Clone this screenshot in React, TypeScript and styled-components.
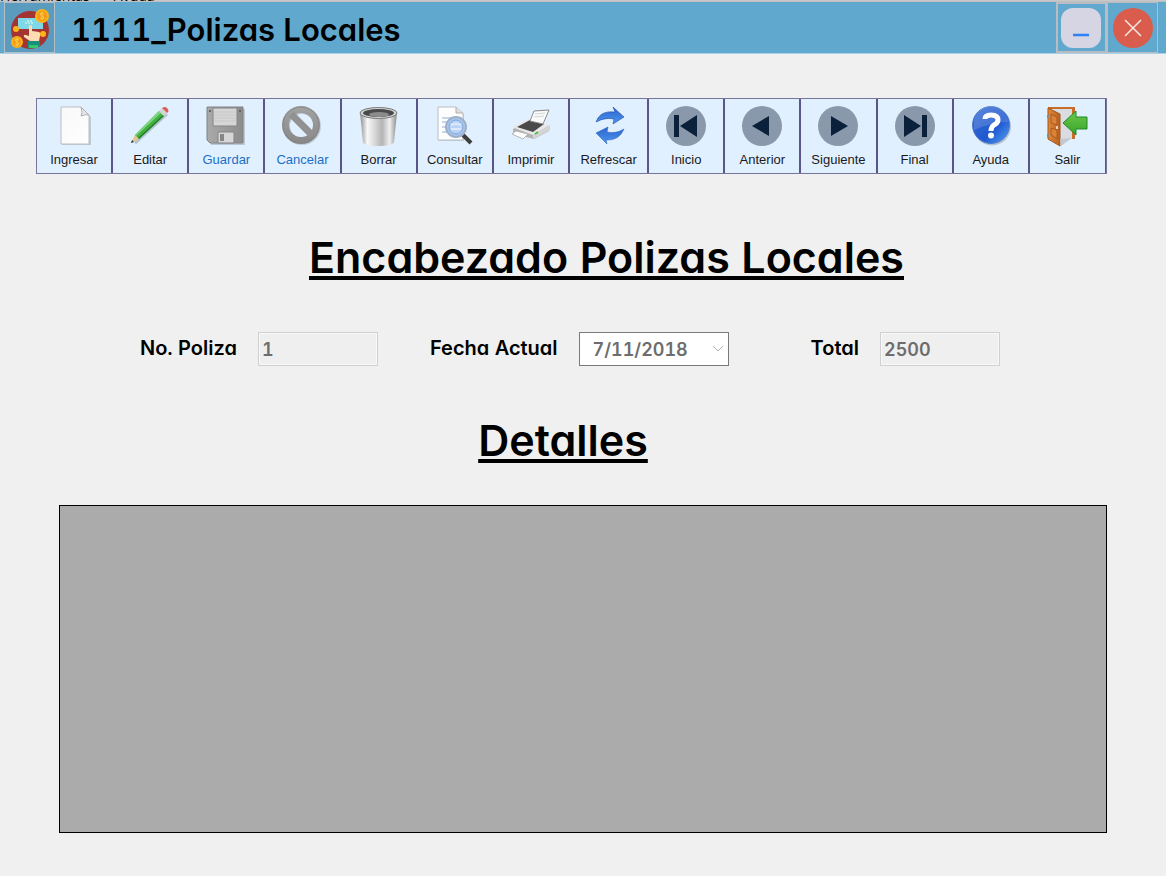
import React from "react";
import styled, { createGlobalStyle } from "styled-components";

const display = `Inter, "Open Sans", sans-serif`;

const Global = createGlobalStyle`
  *, *::before, *::after { box-sizing: border-box; }
  body {
    margin: 0;
    background: #f0f0f0;
    color: #000;
    font-family: ${display};
    font-feature-settings: "cv11", "tnum";
  }
  button, input, select { font: inherit; font-feature-settings: inherit; margin: 0; }
  svg { display: block; }
`;

const Window = styled.div`
  display: flex;
  flex-direction: column;
  min-height: 100vh;
`;

const MenuStrip = styled.div`
  display: flex;
  align-items: flex-end;
  gap: 24px;
  height: 2px;
  overflow: hidden;
  background: #c8c8c8;
  border-bottom: 1px solid #c0c0c0;
  font: 14px/10px "Open Sans", sans-serif;
`;

const TitleBar = styled.header`
  display: flex;
  align-items: center;
  height: 52px;
  padding: 0 8px 0 4px;
  background: #61a8cf;
  border-bottom: 1px solid #a9d0e6;
`;

const Logo = styled.div`
  display: grid;
  place-items: center;
  width: 51px;
  height: 51px;
  background: #5b9bbe;
  border: 1px solid #b4bec4;
`;

const Title = styled.h1`
  flex: 1;
  margin: 4px 0 0 16px;
  font-size: 31px;
  line-height: 40px;
  font-weight: 600;
`;

const Caption = styled.button<{ $thick?: boolean }>`
  display: grid;
  place-items: center;
  width: 51px;
  height: 51px;
  padding: 0;
  background: #61a8cf;
  border: ${(p) => (p.$thick ? 2 : 1)}px solid #b9bcc0;
`;

const Toolbar = styled.nav`
  display: flex;
  margin: 44px 59px 0 36px;
  background: #e0f0ff;
  border: 1px solid #78759c;
`;

const Tool = styled.button<{ $wide?: boolean }>`
  display: flex;
  flex: 1 1 ${(p) => (p.$wide ? 79 : 76)}px;
  min-width: 0;
  flex-direction: column;
  align-items: center;
  gap: 5px;
  height: 74px;
  padding: 6px 0 0;
  background: #e0f0ff;
  border: 0;
  border-right: 2px solid #5b568a;
  color: #1a1a1a;
  font: 13px/16px "Liberation Sans", Arial, sans-serif;
  &:last-child { border-right-width: 1px; }
  &:disabled { color: #1c6fc4; }
`;

const Heading = styled.h2`
  margin: 0;
  font-size: 43px;
  line-height: 52px;
  font-weight: 600;
  text-align: center;
  text-decoration: underline;
  text-decoration-thickness: 4px;
  text-underline-offset: 3px;
  text-decoration-skip-ink: none;
`;

const MainHeading = styled(Heading)`
  margin-top: 57px;
  padding-left: 47px;
`;

const DetailHeading = styled(Heading)`
  margin-top: 48px;
  padding-right: 40px;
`;

const Fields = styled.form`
  display: flex;
  gap: 52px;
  margin: 49px 166px 0 140px;
  font-size: 18px;
  font-weight: 600;
`;

const Field = styled.div`
  display: flex;
  gap: 21px;
  &:last-child { margin-left: auto; }
`;

const Label = styled.label`
  font-size: 20px;
  line-height: 32px;
`;

const Input = styled.input`
  width: 120px;
  height: 34px;
  padding: 0 3px;
  border: 1px solid #d0d0d0;
  background: #efefef;
  color: #6d6d6d;
  box-shadow: inset 0 0 0 1px #f8f8f8;
`;

const DateBox = styled.select`
  width: 150px;
  height: 34px;
  padding: 0 13px;
  appearance: none;
  border: 1px solid #7a7a7a;
  border-radius: 0;
  background: #fff;
  color: #6d6d6d;
  opacity: 1;
`;

const DateWrap = styled.div`
  display: grid;
  align-items: center;
  > * { grid-area: 1 / 1; }
  > svg { justify-self: end; margin-right: 5px; pointer-events: none; }
`;

const Grid = styled.section`
  flex: 1;
  margin: 39px 59px 43px;
  min-height: 200px;
  border: 1px solid #000;
  background: #ababab;
`;

const Icon = ({ children }: { children: React.ReactNode }) => (
  <svg width="42" height="42" viewBox="0 0 42 42" aria-hidden="true">{children}</svg>
);

const Defs = styled.svg`
  position: absolute;
`;

const Shapes = () => (
  <Defs width="0" height="0" aria-hidden="true">
    <defs>
      <linearGradient id="paper" x1="0" y1="0" x2="1" y2="1"><stop offset="0" stopColor="#f8f8f8" /><stop offset="1" stopColor="#fff" /></linearGradient>
      <linearGradient id="metal" x1="0" x2="1"><stop offset="0" stopColor="#8e8e8e" /><stop offset=".2" stopColor="#f8f8f8" /><stop offset=".42" stopColor="#d4d4d4" /><stop offset=".6" stopColor="#b4b4b4" /><stop offset=".8" stopColor="#f0f0f0" /><stop offset="1" stopColor="#8a8a8a" /></linearGradient>
      <linearGradient id="blue" x1="0" y1="0" x2="1" y2="1"><stop offset="0" stopColor="#3a6fd4" /><stop offset=".6" stopColor="#2058d0" /><stop offset="1" stopColor="#55a5f5" /></linearGradient>
      <linearGradient id="arrow" x1="0" y1="0" x2="0" y2="1"><stop offset="0" stopColor="#2b62cf" /><stop offset="1" stopColor="#4f97ee" /></linearGradient>
      <linearGradient id="green" x1="0" y1="0" x2="0" y2="1"><stop offset="0" stopColor="#6cc94a" /><stop offset="1" stopColor="#35a52c" /></linearGradient>
      <linearGradient id="wood" x1="0" x2="1"><stop offset="0" stopColor="#e08a3c" /><stop offset="1" stopColor="#b9601e" /></linearGradient>
      <linearGradient id="grey" x1="0" y1="0" x2="0" y2="1"><stop offset="0" stopColor="#a0a0a0" /><stop offset="1" stopColor="#8a8a8a" /></linearGradient>
      <linearGradient id="disk" x1="0" x2="1"><stop offset="0" stopColor="#aaa" /><stop offset="1" stopColor="#8c8c8c" /></linearGradient>
    </defs>
  </Defs>
);

const NewIcon = () => (
  <Icon>
    <path d="M9 3h20l9 9v28H9z" fill="#9aa4ad" opacity=".5" />
    <path d="M8 2h20l8 8v29H8z" fill="url(#paper)" stroke="#bdbdbd" />
    <path d="M28 2q2 6 0 9 5-2 8-1z" fill="#e6e6e6" stroke="#b0b0b0" />
  </Icon>
);
const EditIcon = () => (
  <Icon>
    <path d="M6 38 14 31 38 9" fill="none" stroke="#8896a3" strokeWidth="3" opacity=".5" />
    <path d="M2 38 6 30 10 34z" fill="#e9c48a" />
    <path d="M2 38 3 35 5 37z" fill="#333" />
    <path d="M6 30 30 6 35 11 10 34z" fill="#43b043" />
    <path d="M6 30 30 6 32 8 7 31z" fill="#7bd67b" />
    <path d="M9 33 34 10 35 11 10 34z" fill="#23802a" />
    <path d="M30 6 33 3 38 8 35 11z" fill="#d5d5d5" />
    <path d="M33 3q3-2 5 0 3 3 0 5z" fill="#d9605a" />
  </Icon>
);
const SaveIcon = () => (
  <Icon>
    <path d="M3 4h37v36H6z" fill="#96a2ad" opacity=".5" />
    <path d="M2 2h36v36H5l-3-3z" fill="url(#disk)" stroke="#828282" />
    <path d="M8 3h24v18H8z" fill="#d6d6d6" stroke="#858585" />
    <path d="M9 7h22M9 10h22M9 13h22M9 16h22" stroke="#c8c8c8" />
    <path d="M13 27h16v11H13z" fill="#d6d6d6" stroke="#858585" />
    <path d="M15 29h4v7h-4z" fill="#858585" />
    <path d="M4 5h2v2H4zM34 5h2v2h-2z" fill="#666" />
  </Icon>
);
const CancelIcon = () => (
  <Icon>
    <circle cx="21" cy="21" r="15.500" fill="none" stroke="#aab4bd" strokeWidth="7" opacity=".6" />
    <circle cx="20" cy="20" r="15.500" fill="none" stroke="url(#grey)" strokeWidth="7" />
    <path d="M10 9 31 30" stroke="#919191" strokeWidth="7" />
    <circle cx="20" cy="20" r="18" fill="none" stroke="#808080" strokeWidth=".7" />
  </Icon>
);
const BinIcon = () => (
  <Icon>
    <path d="M2 8 5 37Q6 41 21 41 35 41 36 37L39 8z" fill="url(#metal)" />
    <ellipse cx="20.500" cy="8" rx="18.500" ry="5.500" fill="#d5d5d5" stroke="#777" />
    <ellipse cx="20.500" cy="8" rx="15.500" ry="4" fill="#4a4a4a" />
    <ellipse cx="21" cy="9.500" rx="10" ry="2.500" fill="#8c8c8c" />
  </Icon>
);
const SearchIcon = () => (
  <Icon>
    <path d="M5 3h18l7 6v27H5z" fill="#9aa4ad" opacity=".4" />
    <path d="M4 2h18l7 6v27H4z" fill="#fdfdfd" stroke="#b9bec3" />
    <path d="M22 2v6h7" fill="#ddd" stroke="#b0b0b0" />
    <path d="M8 13h11M8 17h6M8 22h5M8 27h6" stroke="#8cb0de" />
    <path d="M29 30 37 38" stroke="#3f3f3f" strokeWidth="4" />
    <circle cx="22" cy="22" r="10" fill="#a9c8ef" stroke="#9db0c8" strokeWidth="2" />
    <circle cx="22" cy="22" r="7" fill="#b9d2f5" stroke="#7fa5dd" />
    <path d="M17 20q5-2 10 0M17 24h10" stroke="#dce9fa" strokeWidth="2" fill="none" />
  </Icon>
);
const PrintIcon = () => (
  <Icon>
    <path d="M3 24 20 15 40 21 39 26 24 34 3 29z" fill="#b4b4b4" />
    <path d="M2 22 18 14 40 20 23 30z" fill="#e8e8e8" />
    <path d="M7 22 20 15 34 19 23 27z" fill="#4a4a4a" />
    <path d="M20 16 24 6 39 5 33 19z" fill="#fafafa" stroke="#8a8a8a" />
    <path d="M25 9 35 8M24 12 34 11" stroke="#d0d4d8" />
    <path d="M2 29 6 26 18 29 13 34z" fill="#fff" stroke="#b5b5b5" />
    <path d="M23 30 40 20v5L23 34z" fill="#d4d4d4" />
    <path d="M25 29 28 27" stroke="#4bbf3f" strokeWidth="2" />
  </Icon>
);
const RefreshIcon = () => (
  <Icon>
    <path d="M8 17Q12 5 27 7L25 2 36 12 25 19 26 14Q17 12 8 17z" fill="url(#arrow)" stroke="#244fa8" strokeWidth=".6" />
    <path d="M36 24Q31 36 18 35L19 39 8 28 20 22 19 27Q28 29 36 24z" fill="url(#arrow)" stroke="#2f67c0" strokeWidth=".6" />
  </Icon>
);
const NavIcon = ({ d }: { d: string }) => (
  <Icon>
    <circle cx="21" cy="21" r="20" fill="#8999ab" />
    <path d={d} fill="#0b203b" />
  </Icon>
);
const HelpIcon = () => (
  <Icon>
    <circle cx="22" cy="21.500" r="19" fill="#97a5b5" opacity=".6" />
    <circle cx="21" cy="20" r="18.500" fill="url(#blue)" stroke="#4a7bcc" />
    <path d="M4 19A17 17 0 0 1 38 17Q23 17 4 25z" fill="#fff" opacity=".15" />
    <path d="M15 14Q15 10 21 10 28 10 28 15 28 18 24 20 21 22 21 26" fill="none" stroke="#fff" strokeWidth="5" />
    <circle cx="21" cy="30.500" r="3" fill="#fff" />
  </Icon>
);
const ExitIcon = () => (
  <Icon>
    <path d="M2 2h27v32H2z" fill="#c96e2a" />
    <path d="M5 4h21v30H5z" fill="#d9dde2" />
    <path d="M2 3 14 9V41L2 34z" fill="url(#wood)" stroke="#a45418" />
    <path d="M5 9 11 12V20L5 18zM5 23 11 25V34L5 30z" fill="#d98238" stroke="#aa5a1e" />
    <path d="M2 10v3M2 29v3" stroke="#888" strokeWidth="2" />
    <path d="M11 21v3" stroke="#eee" strokeWidth="1.500" />
    <path d="M14 34 26 33 15 41z" fill="#c3c8ce" />
    <path d="M17 18 30 6V12H41V24H30V30z" fill="url(#green)" stroke="#238a20" />
  </Icon>
);

const tools: { name: string; icon: React.ReactNode; disabled?: boolean; wide?: boolean }[] = [
  { name: "Ingresar", icon: <NewIcon /> },
  { name: "Editar", icon: <EditIcon /> },
  { name: "Guardar", icon: <SaveIcon />, disabled: true },
  { name: "Cancelar", icon: <CancelIcon />, disabled: true },
  { name: "Borrar", icon: <BinIcon /> },
  { name: "Consultar", icon: <SearchIcon /> },
  { name: "Imprimir", icon: <PrintIcon /> },
  { name: "Refrescar", icon: <RefreshIcon />, wide: true },
  { name: "Inicio", icon: <NavIcon d="M9 10h5v22H9zM15 21 32 10V32z" /> },
  { name: "Anterior", icon: <NavIcon d="M11 21 28 11V31z" /> },
  { name: "Siguiente", icon: <NavIcon d="M31 21 14 11V31z" /> },
  { name: "Final", icon: <NavIcon d="M33 10h-5v22h5zM27 21 10 10V32z" /> },
  { name: "Ayuda", icon: <HelpIcon /> },
  { name: "Salir", icon: <ExitIcon /> },
];

const Coin = ({ x, y, r }: { x: number; y: number; r: number }) => (
  <>
    <circle cx={x} cy={y} r={r} fill="#fbb316" />
    <circle cx={x} cy={y} r={r - 2} fill="#f59a1a" />
    <path d={`M${x + 2} ${y - 2}q-4-2-4 0 0 1 2 2 2 1 2 2-1 2-4 0M${x} ${y - 4}v8`} fill="none" stroke="#fccc4a" />
  </>
);

export default function App() {
  return (
    <Window>
      <Global />
      <Shapes />
      <MenuStrip>
        <span>Herramientas</span>
        <span>Ayuda</span>
      </MenuStrip>
      <TitleBar>
        <Logo>
          <svg width="44" height="44" viewBox="0 0 44 44" aria-hidden="true">
            <circle cx="22" cy="24" r="19" fill="#a43434" />
            <path d="M10 12h25v11H10z" fill="#7fd8e6" />
            <path d="M17 17h8M19 15h5" stroke="#c5f1f5" strokeWidth="1.500" strokeDasharray="2 1" />
            <path d="M22 35 16 31q-1-3 2-2l3 1V20q1-2 3 0v5l7 1q2 1 1 4l-1 5z" fill="#fddcb4" />
            <path d="M20 35h12v5q-5 3-12 2z" fill="#16907c" />
            <path d="M21 39h9v3h-9z" fill="#35c66d" />
            <circle cx="8" cy="23" r="3" fill="#fbb316" />
            <circle cx="35" cy="28" r="3" fill="#fbb316" />
            <Coin x={34} y={10} r={7} />
            <Coin x={9} y={36} r={6} />
          </svg>
        </Logo>
        <Title>1111_Polizas Locales</Title>
        <Caption $thick type="button" aria-label="Minimizar">
          <svg width="42" height="42" viewBox="0 0 42 42" aria-hidden="true">
            <rect x="0" y="1" width="40" height="40" rx="12" fill="#d5d5e3" />
            <path d="M12 28h16" stroke="#2f80f5" strokeWidth="2.500" />
          </svg>
        </Caption>
        <Caption type="button" aria-label="Cerrar">
          <svg width="42" height="42" viewBox="0 0 42 42" aria-hidden="true">
            <circle cx="21" cy="21" r="20" fill="#d95c4c" />
            <path d="M13 13 29 29M29 13 13 29" stroke="#f8e8e6" strokeWidth="1.500" />
          </svg>
        </Caption>
      </TitleBar>
      <Toolbar>
        {tools.map((t) => (
          <Tool key={t.name} type="button" disabled={t.disabled} $wide={t.wide}>
            {t.icon}
            {t.name}
          </Tool>
        ))}
      </Toolbar>
      <MainHeading>Encabezado Polizas Locales</MainHeading>
      <Fields>
        <Field>
          <Label htmlFor="poliza">No. Poliza</Label>
          <Input id="poliza" defaultValue="1" disabled />
        </Field>
        <Field>
          <Label htmlFor="fecha">Fecha Actual</Label>
          <DateWrap>
            <DateBox id="fecha" disabled><option>7/11/2018</option></DateBox>
            <svg width="12" height="8" viewBox="0 0 12 8" aria-hidden="true"><path d="M1 1 6 6 11 1" fill="none" stroke="#b0b0b0" /></svg>
          </DateWrap>
        </Field>
        <Field>
          <Label htmlFor="total">Total</Label>
          <Input id="total" defaultValue="2500" disabled />
        </Field>
      </Fields>
      <DetailHeading>Detalles</DetailHeading>
      <Grid aria-label="Detalles" />
    </Window>
  );
}
